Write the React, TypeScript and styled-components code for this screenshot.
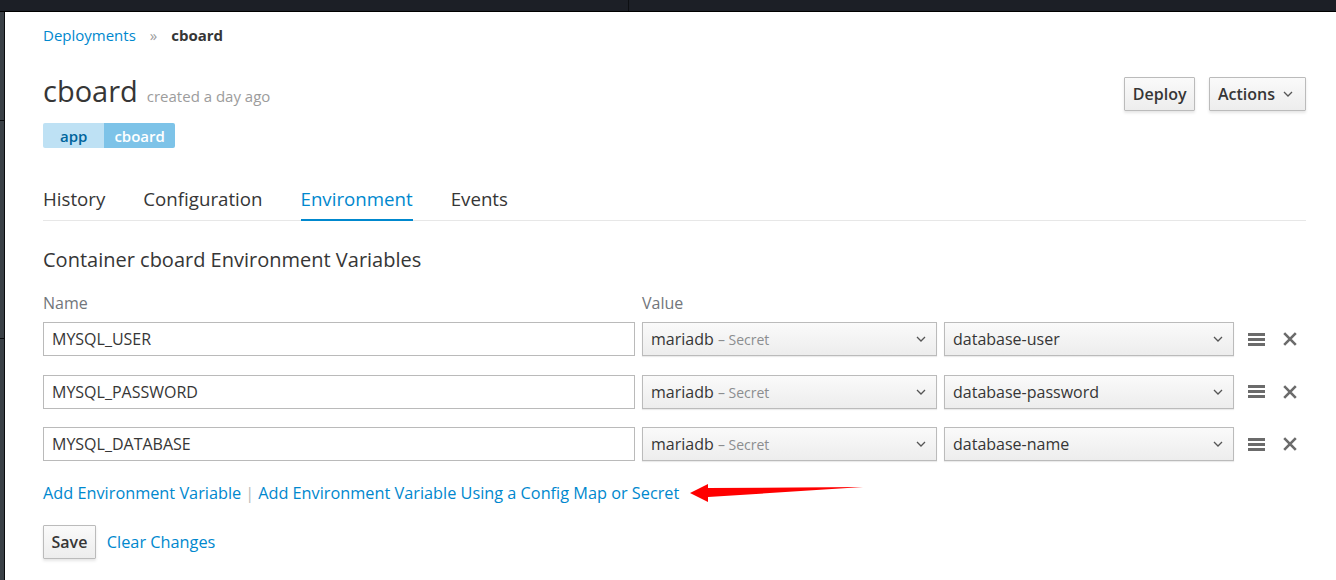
import React from "react";
import styled, { createGlobalStyle } from "styled-components";

const Global = createGlobalStyle`
  html, body { margin: 0; padding: 0; background: #fff; }
  body { font-family: "Open Sans", "Liberation Sans", sans-serif; color: #363636; }
  * { box-sizing: border-box; }
`;

const Shell = styled.div`
  width: 1336px;
  height: 580px;
  position: relative;
  overflow: hidden;
  display: flex;
  flex-direction: column;
`;

const TopBar = styled.div`
  height: 12px;
  background: #1c1f26;
  border-bottom: 1px solid #000;
  display: grid;
  grid-template-columns: 629px 1fr;
`;

const TopCell = styled.div`
  border-right: 1px solid #0d0f12;
`;

const Body = styled.div`
  flex: 1;
  display: flex;
`;

const LeftStrip = styled.div`
  width: 5px;
  background: #3a4046;
  border-right: 1px solid #0a0b0d;
  display: flex;
  flex-direction: column;
`;

const StripSeg = styled.div<{ h: number }>`
  height: ${(p) => p.h}px;
  border-bottom: 1px solid #0a0b0d;
`;

const Main = styled.main`
  flex: 1;
  padding: 14px 30px 0 38px;
`;

const Breadcrumb = styled.nav`
  display: flex;
  align-items: center;
  gap: 14px;
  font-size: 15px;
  height: 18px;
`;

const Link = styled.a`
  color: #0088ce;
  text-decoration: none;
  cursor: pointer;
`;

const Sep = styled.span`
  color: #9c9c9c;
  font-size: 15px;
`;

const Current = styled.span`
  font-weight: 700;
  color: #363636;
`;

const HeaderRow = styled.div`
  display: flex;
  justify-content: space-between;
  align-items: flex-start;
  margin-top: 27px;
`;

const TitleBlock = styled.div`
  display: flex;
  flex-direction: column;
`;

const Title = styled.h1`
  margin: 0;
  font-size: 29px;
  font-weight: 400;
  line-height: 40px;
  color: #363636;
  display: flex;
  align-items: baseline;
  gap: 9px;
`;

const Sub = styled.small`
  font-size: 15px;
  color: #9c9c9c;
`;

const Labels = styled.div`
  display: flex;
  margin-top: 7px;
  border-radius: 2px;
  overflow: hidden;
  width: max-content;
`;

const Label = styled.span<{ dark?: boolean }>`
  height: 25px;
  display: flex;
  align-items: center;
  padding: 0 ${(p) => (p.dark ? 10 : 17)}px;
  font-size: 15px;
  font-weight: 600;
  background: ${(p) => (p.dark ? "#7dc3e8" : "#bee1f4")};
  color: ${(p) => (p.dark ? "#fff" : "#00659c")};
`;

const Actions = styled.div`
  display: flex;
  gap: 14px;
  margin-top: 6px;
`;

const Button = styled.button<{ wide?: boolean }>`
  font-family: inherit;
  font-size: 16px;
  font-weight: 600;
  color: #363636;
  height: 34px;
  padding: 0 ${(p) => (p.wide ? 12 : 7.5)}px 0 ${(p) => (p.wide ? 8 : 7.5)}px;
  background: linear-gradient(#fafafa, #ededed);
  border: 1px solid #bbb;
  border-radius: 1px;
  box-shadow: 0 2px 3px rgba(3, 3, 3, 0.1);
  display: flex;
  align-items: center;
  gap: 8px;
`;

const Tabs = styled.div`
  display: flex;
  gap: 38px;
  margin-top: 38px;
  border-bottom: 1px solid #e7e7e7;
`;

const Tab = styled.div<{ active?: boolean }>`
  font-size: 18.7px;
  padding-bottom: 7px;
  line-height: 26px;
  color: ${(p) => (p.active ? "#0088ce" : "#363636")};
  border-bottom: 2px solid ${(p) => (p.active ? "#0088ce" : "transparent")};
  margin-bottom: -1px;
`;

const SectionTitle = styled.h3`
  margin: 26px 0 0;
  font-size: 20px;
  font-weight: 400;
  line-height: 26px;
  color: #363636;
`;

const Grid = styled.div`
  display: grid;
  grid-template-columns: 592px 295px 290px 60px;
  column-gap: 7px;
  margin-top: 19px;
  align-items: center;
`;

const ColHead = styled.div`
  font-size: 16px;
  color: #72767b;
  line-height: 22px;
  margin-bottom: 8px;
`;

const FieldRow = styled.div`
  display: contents;
`;

const Input = styled.div`
  height: 34px;
  border: 1px solid #bababa;
  background: #fff;
  display: flex;
  align-items: center;
  padding: 0 8px;
  font-size: 16px;
  color: #363636;
  margin-bottom: 18.5px;
`;

const Select = styled.div`
  height: 34px;
  border: 1px solid #bbb;
  background: linear-gradient(#fafafa, #ededed);
  box-shadow: 0 1px 1px rgba(3, 3, 3, 0.08);
  display: flex;
  align-items: center;
  justify-content: space-between;
  padding: 0 10px 0 8px;
  font-size: 16px;
  color: #363636;
  margin-bottom: 18.5px;
`;

const Muted = styled.span`
  font-size: 14px;
  color: #8b8d8f;
`;

const RowActions = styled.div`
  display: flex;
  align-items: center;
  gap: 18px;
  padding-left: 7px;
  margin-bottom: 18.5px;
`;

const AddLinks = styled.div`
  display: flex;
  align-items: center;
  gap: 4px;
  font-size: 16.3px;
  margin-top: 2px;
`;

const Pipe = styled.span`
  color: #bbb;
`;

const Footer = styled.div`
  display: flex;
  align-items: center;
  gap: 11px;
  margin-top: 21px;
  font-size: 16.3px;
`;

const Arrow = styled.svg`
  position: absolute;
  left: 690px;
  top: 480px;
`;

const Chevron = () => (
  <svg width="10" height="6" viewBox="0 0 10 6">
    <path d="M1 1l4 4 4-4" fill="none" stroke="#555" strokeWidth="1.3" />
  </svg>
);

const Bars = () => (
  <svg width="17" height="13" viewBox="0 0 17 13">
    <rect x="0" y="0" width="17" height="3" fill="#6b6b6b" />
    <rect x="0" y="5" width="17" height="3" fill="#6b6b6b" />
    <rect x="0" y="10" width="17" height="3" fill="#6b6b6b" />
  </svg>
);

const Close = () => (
  <svg width="14" height="14" viewBox="0 0 14 14">
    <path d="M1.2 1.2l11.6 11.6M12.8 1.2L1.2 12.8" stroke="#6b6b6b" strokeWidth="2.6" />
  </svg>
);

const rows = [
  { name: "MYSQL_USER", key: "database-user" },
  { name: "MYSQL_PASSWORD", key: "database-password" },
  { name: "MYSQL_DATABASE", key: "database-name" },
];

export default function App() {
  return (
    <Shell>
      <Global />
      <TopBar>
        <TopCell />
        <div />
      </TopBar>
      <Body>
        <LeftStrip>
          <StripSeg h={109} />
          <StripSeg h={218} />
        </LeftStrip>
        <Main>
          <Breadcrumb>
            <Link>Deployments</Link>
            <Sep>»</Sep>
            <Current>cboard</Current>
          </Breadcrumb>
          <HeaderRow>
            <TitleBlock>
              <Title>
                cboard <Sub>created a day ago</Sub>
              </Title>
              <Labels>
                <Label>app</Label>
                <Label dark>cboard</Label>
              </Labels>
            </TitleBlock>
            <Actions>
              <Button>Deploy</Button>
              <Button wide>
                Actions <Chevron />
              </Button>
            </Actions>
          </HeaderRow>
          <Tabs>
            <Tab>History</Tab>
            <Tab>Configuration</Tab>
            <Tab active>Environment</Tab>
            <Tab>Events</Tab>
          </Tabs>
          <SectionTitle>Container cboard Environment Variables</SectionTitle>
          <Grid>
            <ColHead>Name</ColHead>
            <ColHead>Value</ColHead>
            <div />
            <div />
            {rows.map((r) => (
              <FieldRow key={r.name}>
                <Input>{r.name}</Input>
                <Select>
                  <span>
                    mariadb <Muted>– Secret</Muted>
                  </span>
                  <Chevron />
                </Select>
                <Select>
                  <span>{r.key}</span>
                  <Chevron />
                </Select>
                <RowActions>
                  <Bars />
                  <Close />
                </RowActions>
              </FieldRow>
            ))}
          </Grid>
          <AddLinks>
            <Link>Add Environment Variable</Link>
            <Pipe>|</Pipe>
            <Link>Add Environment Variable Using a Config Map or Secret</Link>
          </AddLinks>
          <Footer>
            <Button>Save</Button>
            <Link>Clear Changes</Link>
          </Footer>
        </Main>
      </Body>
      <Arrow width="180" height="26" viewBox="0 0 180 26">
        <polygon points="0,13 18,4 18,8 173,7 18,17 18,22" fill="#f00" />
      </Arrow>
    </Shell>
  );
}
